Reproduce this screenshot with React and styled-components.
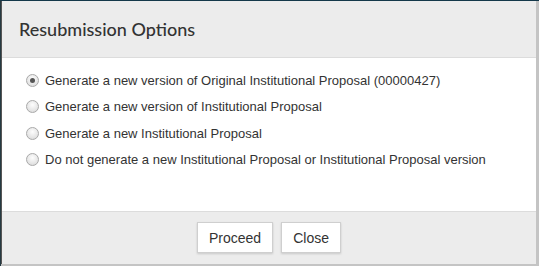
import styled, { createGlobalStyle } from "styled-components";
import { useState } from "react";

const options = [
  "Generate a new version of Original Institutional Proposal (00000427)",
  "Generate a new version of Institutional Proposal",
  "Generate a new Institutional Proposal",
  "Do not generate a new Institutional Proposal or Institutional Proposal version",
];

const App = () => {
  const [selected, setSelected] = useState(0);

  return (
    <>
      <GlobalStyle />
      <Backdrop>
        <Dialog>
          <Header>
            <Title>Resubmission Options</Title>
          </Header>
          <Body>
            {options.map((label, i) => (
              <Option key={i} onClick={() => setSelected(i)}>
                <Radio checked={selected === i} />
                <OptionLabel>{label}</OptionLabel>
              </Option>
            ))}
          </Body>
          <Footer>
            <Button>Proceed</Button>
            <Button>Close</Button>
          </Footer>
        </Dialog>
      </Backdrop>
    </>
  );
};

export default App;

const GlobalStyle = createGlobalStyle`
  html, body {
    margin: 0;
    padding: 0;
    background: #c4c4c4;
  }
  * {
    box-sizing: border-box;
  }
`;

const Backdrop = styled.div`
  width: 539px;
  height: 266px;
  background: #c4c4c4;
  border-top: 1px solid #14384a;
  border-left: 1px solid #263a42;
`;

const Dialog = styled.div`
  width: 535px;
  height: 263px;
  display: flex;
  flex-direction: column;
  background: #fff;
  border-left: 1px solid #555;
`;

const Header = styled.div`
  height: 57px;
  display: flex;
  align-items: center;
  padding: 0 17px;
  background: #ececec;
  border-bottom: 1px solid #dcdcdc;
`;

const Title = styled.h4`
  margin: 0;
  font-family: Lato, "Open Sans", sans-serif;
  font-size: 18px;
  font-weight: 500;
  color: #333;
`;

const Body = styled.div`
  flex: 1;
  display: flex;
  flex-direction: column;
  gap: 8.67px;
  padding: 13px 24px 0;
  background: #fff;
`;

const Option = styled.label`
  display: flex;
  align-items: center;
  height: 18px;
  cursor: pointer;
`;

const Radio = styled.span`
  width: 13px;
  height: 13px;
  margin-right: 6px;
  border-radius: 50%;
  border: 1px solid #a9a9a9;
  background: radial-gradient(circle at 50% 35%, #fdfdfd 0%, #e6e6e6 60%, #d4d4d4 100%);
  display: flex;
  align-items: center;
  justify-content: center;
  flex-shrink: 0;

  &::after {
    content: "";
    width: 5px;
    height: 5px;
    border-radius: 50%;
    background: #555;
    display: ${(p) => (p.checked ? "block" : "none")};
  }
`;

const OptionLabel = styled.span`
  font-family: "Liberation Sans", Arial, sans-serif;
  font-size: 13px;
  color: #333;
`;

const Footer = styled.div`
  height: 53px;
  display: flex;
  align-items: center;
  justify-content: center;
  gap: 8px;
  padding-bottom: 1px;
  background: #ececec;
  border-top: 1px solid #dcdcdc;
`;

const Button = styled.button`
  height: 31px;
  padding: 0 11px;
  background: #fff;
  border: 1px solid #cfcfcf;
  box-shadow: 0 1px 2px rgba(0, 0, 0, 0.15);
  font-family: "Liberation Sans", Arial, sans-serif;
  font-size: 14px;
  color: #333;
  cursor: pointer;
`;
